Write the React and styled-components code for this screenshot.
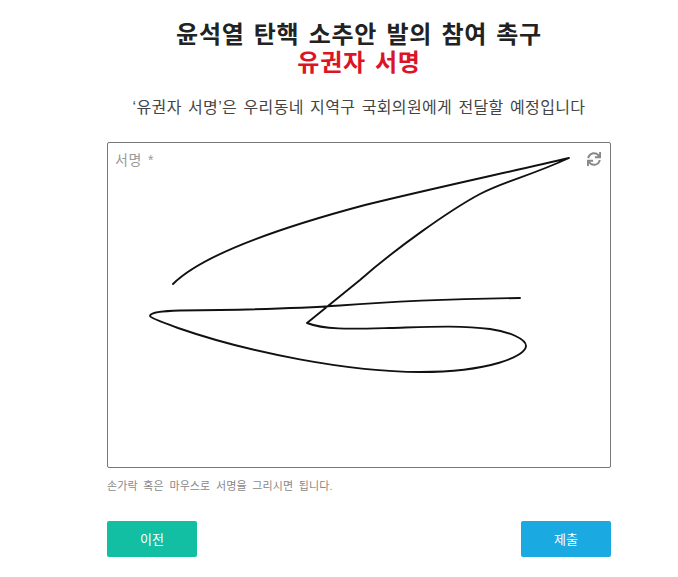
import React from 'react';
import styled, { createGlobalStyle } from 'styled-components';
import { FaSync } from 'react-icons/fa';

const GlobalStyle = createGlobalStyle`
  body {
    margin: 0;
    background: #fff;
    font-family: "Liberation Sans", "Noto Sans CJK KR", sans-serif;
  }
`;

const Page = styled.div`
  width: 504px;
  margin-left: 107px;
  padding-top: 21px;
`;

const Title = styled.h1`
  margin: 0;
  font-size: 24px;
  line-height: 28px;
  font-weight: 700;
  letter-spacing: 0.7px;
  word-spacing: 2px;
  text-align: center;
  color: #222;
`;

const Accent = styled.span`
  display: block;
  color: #dc1428;
`;

const Lead = styled.p`
  margin: 21px 0 24px;
  font-size: 16px;
  line-height: 20px;
  letter-spacing: 0.36px;
  word-spacing: 1.5px;
  text-align: center;
  color: #444;
`;

const SignBox = styled.div`
  position: relative;
  height: 324px;
  border: 1px solid #777;
  border-radius: 2px;
`;

const SignLabel = styled.span`
  position: absolute;
  top: 9px;
  left: 7px;
  font-size: 14px;
  line-height: 17px;
  letter-spacing: 0.6px;
  word-spacing: 1.5px;
  color: #999;
`;

const ResetButton = styled.button`
  position: absolute;
  top: 9px;
  right: 9px;
  display: flex;
  padding: 0;
  border: 0;
  background: none;
  color: #888;
  font-size: 14px;
  cursor: pointer;
`;

const Stroke = styled.svg`
  position: absolute;
  top: 0;
  left: 0;
  width: 100%;
  height: 100%;
  pointer-events: none;
`;

const Hint = styled.p`
  margin: 10px 0 0;
  font-size: 11px;
  line-height: 16px;
  letter-spacing: 0.1px;
  word-spacing: 2.5px;
  color: #888;
`;

const Actions = styled.div`
  display: flex;
  justify-content: space-between;
  margin-top: 27px;
`;

const ActionButton = styled.button`
  width: 90px;
  height: 36px;
  padding: 0 0 2px;
  border: 0;
  border-radius: 2px;
  background: ${({ $color }) => $color};
  color: #fff;
  font-family: inherit;
  font-size: 13px;
  font-weight: 400;
  cursor: pointer;
`;

// the stroke as drawn on the pad, in pad coordinates
const signature = [
  'M65 141',
  'C96 110 182 82 257 62',
  'C322 46 392 31 461 15',
  'C422 33 397 38 372 51',
  'C342 67 287 106 252 137',
  'L199 180',
  'C217 187 242 186 282 185',
  'C317 184 352 182 382 186',
  'C402 189 418 196 418 203',
  'C418 213 382 229 312 229',
  'C242 229 142 210 70 185',
  'C57 180 42 175 42 173',
  'C42 169 57 168 72 167.5',
  'C122 167 182 166 232 162.5',
  'C292 158 342 156 412 155',
].join(' ');

function App() {
  return (
    <Page>
      <GlobalStyle />
      <Title>
        윤석열 탄핵 소추안 발의 참여 촉구
        <Accent>유권자 서명</Accent>
      </Title>
      <Lead>‘유권자 서명’은 우리동네 지역구 국회의원에게 전달할 예정입니다</Lead>
      <SignBox>
        <Stroke>
          <path d={signature} fill="none" stroke="#111" strokeWidth="1.9" strokeLinejoin="round" strokeLinecap="round" />
        </Stroke>
        <SignLabel>서명 *</SignLabel>
        <ResetButton aria-label="다시 그리기">
          <FaSync />
        </ResetButton>
      </SignBox>
      <Hint>손가락 혹은 마우스로 서명을 그리시면 됩니다.</Hint>
      <Actions>
        <ActionButton $color="#12bfa2">이전</ActionButton>
        <ActionButton $color="#1aa9e1">제출</ActionButton>
      </Actions>
    </Page>
  );
}

export default App;
